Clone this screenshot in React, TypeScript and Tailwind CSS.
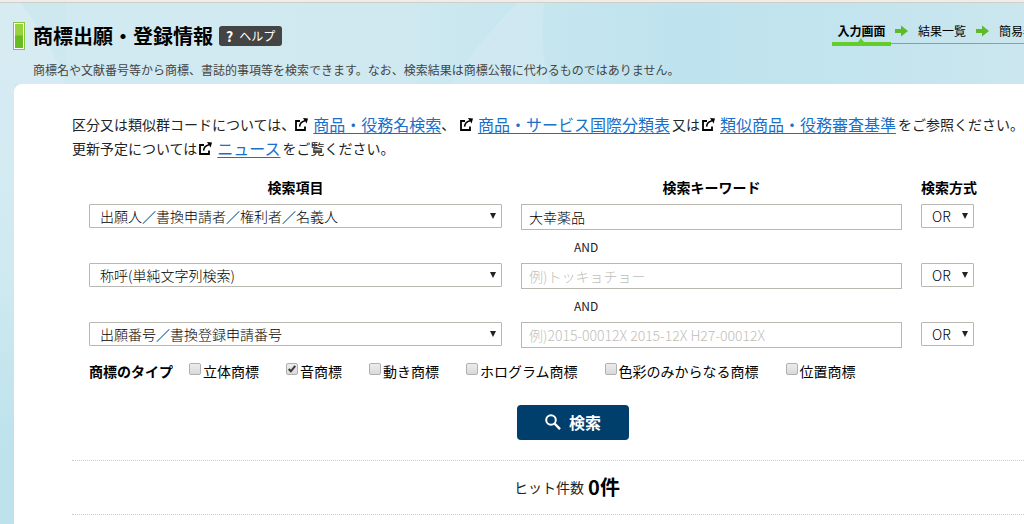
import { useState } from "react";

const FONT = "font-['Noto_Sans_CJK_JP','Noto_Sans',sans-serif]";

function External() {
  return (
    <svg viewBox="0 0 13 13" className="inline-block h-[13px] w-[13px] shrink-0" aria-hidden="true">
      <path d="M5 3H1V12H10V8.5" fill="none" stroke="#000" strokeWidth="1.8" />
      <path d="M4.6 8.6C4.8 5.6 6.6 3.6 10 2.8" fill="none" stroke="#000" strokeWidth="1.6" />
      <path d="M8 0L13 0.6L11.6 5.6Z" fill="#000" />
    </svg>
  );
}

function StepArrow() {
  return (
    <svg viewBox="0 0 13 12" className="h-3 w-[13px] shrink-0" aria-hidden="true">
      <path d="M0 4H6V0.5L13 6L6 11.5V8H0Z" fill="#5dbb27" />
    </svg>
  );
}

function ExtLink({ children }: { children: string }) {
  return (
    <span className="inline-flex items-center gap-[5px]">
      <External />
      <a href="#" className="text-base leading-6 text-[#1a6fc9] underline underline-offset-2">
        {children}
      </a>
    </span>
  );
}

function Select({ label, options }: { label: string; options: string[] }) {
  return (
    <div className="relative">
      <select
        aria-label={label}
        className="block h-6 w-full appearance-none rounded-[1px] border border-[#b8b8b0] bg-white pr-4 pl-[10px] text-sm leading-[22px] font-light text-black"
      >
        {options.map((o) => (
          <option key={o}>{o}</option>
        ))}
      </select>
      <svg viewBox="0 0 6 6" className="pointer-events-none absolute top-[9px] right-[6px] h-[6px] w-[6px]" aria-hidden="true">
        <path d="M0 0H6L3 6Z" fill="#222" />
      </svg>
    </div>
  );
}

const rows = [
  { item: "出願人／書換申請者／権利者／名義人", value: "大幸薬品", hint: "" },
  { item: "称呼(単純文字列検索)", value: "", hint: "例)トッキョチョー" },
  { item: "出願番号／書換登録申請番号", value: "", hint: "例)2015-00012X 2015-12X H27-00012X" },
];

const types = ["立体商標", "音商標", "動き商標", "ホログラム商標", "色彩のみからなる商標", "位置商標"];

function TypeBox({ label, initial }: { label: string; initial: boolean }) {
  const [on, setOn] = useState(initial);
  return (
    <label className="flex items-center gap-[2px]">
      <span className="relative -mt-1 block h-3 w-3">
        <input
          type="checkbox"
          checked={on}
          onChange={() => setOn(!on)}
          className="block h-3 w-3 appearance-none rounded-[2px] border border-[#b0b0b0] bg-linear-to-b from-[#ededed] to-[#d9d9d9]"
        />
        {on && (
          <svg viewBox="0 0 13 13" className="pointer-events-none absolute inset-0 h-3 w-3" aria-hidden="true">
            <path d="M3 6.5L5.3 9L10 3" fill="none" stroke="#3a3a3a" strokeWidth="2.2" />
          </svg>
        )}
      </span>
      {label}
    </label>
  );
}

export default function App() {
  return (
    <div className={`${FONT} relative flex min-h-screen flex-col overflow-hidden bg-[#bfe3ed] text-sm text-black`}>
      <svg className="absolute inset-0 h-full w-full" viewBox="0 0 1024 524" preserveAspectRatio="none" aria-hidden="true">
        <defs>
          <linearGradient id="sky" x1="0" x2="1" y1="0" y2="0">
            <stop offset="0" stopColor="#cfe8f0" />
            <stop offset="0.4" stopColor="#cde8f0" />
            <stop offset="0.66" stopColor="#bfe3ee" />
            <stop offset="0.8" stopColor="#c1e4ee" />
            <stop offset="1" stopColor="#cbe6ee" />
          </linearGradient>
          <linearGradient id="side" x1="0" x2="0" y1="0" y2="1">
            <stop offset="0" stopColor="#d8ebf3" />
            <stop offset="0.5" stopColor="#d0eaf1" />
            <stop offset="0.85" stopColor="#bde2ec" />
          </linearGradient>
        </defs>
        <rect width="1024" height="524" fill="url(#sky)" />
        <path d="M0 0H18Q50 40 66 84H14V524H0Z" fill="url(#side)" />
        <path d="M66 0H418V84H66Z" fill="#d3eaf1" fillOpacity="0.5" />
        <path d="M520 0H545Q538 45 550 84H450Q480 40 520 0Z" fill="#d3eaf2" fillOpacity="0.6" />
      </svg>

      <div className="relative h-[3px] border-b border-[#cfcfc8] bg-[#ededeb]" />

      <header className="relative flex h-[81px] items-start pl-[13px]">
        <div className="flex-1">
          <div className="flex items-center pt-[18px]">
            <span className="h-7 w-3 border border-[#7ecb35] bg-white p-px">
              <span className="block h-full bg-linear-to-b from-[#98d33e] from-45% to-[#68bb22] to-50%" />
            </span>
            <h1 className="pl-2 text-xl leading-[30px] font-bold">商標出願・登録情報</h1>
            <button
              type="button"
              className="ml-[6px] flex h-5 items-center gap-[6px] rounded-[3px] bg-[#444] px-[7px] text-xs leading-5 text-white"
            >
              <b className="text-sm">?</b>ヘルプ
            </button>
          </div>
          <p className="pt-[10px] pl-5 text-xs leading-[18px] whitespace-nowrap text-[#444]">
            商標名や文献番号等から商標、書誌的事項等を検索できます。なお、検索結果は商標公報に代わるものではありません。
          </p>
        </div>
        <ol className="flex w-[192px] items-start overflow-hidden pt-[19px] text-xs leading-[18px] whitespace-nowrap">
          <li className="relative w-[59px] shrink-0 border-b-4 border-[#66cc2b] pb-[2px] text-center font-bold" aria-current="step">
            入力画面
            <svg viewBox="0 0 6 4" className="absolute bottom-0 left-[26px] h-1 w-[6px]" aria-hidden="true">
              <path d="M3 0L6 4H0Z" fill="#66cc2b" />
            </svg>
          </li>
          <li className="flex shrink-0 items-center gap-[10px] border-b border-[#999] pb-[3px] pl-1">
            <StepArrow />
            結果一覧
            <StepArrow />
            簡易表示
          </li>
        </ol>
      </header>

      <main className="relative ml-[14px] flex-1 rounded-tl-[8px] bg-white pt-7 pl-[58px]">
        <div className="leading-6 whitespace-nowrap text-[#222]">
          <p className="flex items-center">
            区分又は類似群コードについては、
            <ExtLink>商品・役務名検索</ExtLink>、<span className="w-[5px]" />
            <ExtLink>商品・サービス国際分類表</ExtLink>
            <span className="px-[2px]">又は</span>
            <ExtLink>類似商品・役務審査基準</ExtLink>
            <span className="pl-[2px]">をご参照ください。</span>
          </p>
          <p className="flex items-center">
            更新予定については<span className="w-[2px]" />
            <ExtLink>ニュース</ExtLink>
            <span className="pl-[2px]">をご覧ください。</span>
          </p>
        </div>

        <form onSubmit={(e) => e.preventDefault()}>
          <div className="pt-[17px] pr-[50px] pl-[17px]">
            <div className="grid grid-cols-[413fr_381fr_53px] gap-x-[19px] pb-[7px] text-center leading-5 font-bold whitespace-nowrap">
              <span>検索項目</span>
              <span>検索キーワード</span>
              <span>検索方式</span>
            </div>
            {rows.map((r, i) => (
              <div key={r.item}>
                {i > 0 && (
                  <div className="grid h-[33px] grid-cols-[413fr_381fr_53px] items-center gap-x-[19px]">
                    <span className="col-start-2 pl-[53px] text-xs leading-4 text-[#222]">AND</span>
                  </div>
                )}
                <div className="grid grid-cols-[413fr_381fr_53px] items-start gap-x-[19px]">
                  <Select label="検索項目" options={[r.item]} />
                  <input
                    type="text"
                    aria-label="検索キーワード"
                    defaultValue={r.value}
                    placeholder={r.hint}
                    className="h-[26px] w-full border border-[#b8b8b0] bg-white px-[7px] text-sm font-light text-black placeholder:text-[#c0c0ba]"
                  />
                  <Select label="検索方式" options={["OR", "AND"]} />
                </div>
              </div>
            ))}
            <fieldset className="flex items-center pt-[13px] leading-5 whitespace-nowrap">
              <legend className="float-left pr-4 font-bold">商標のタイプ</legend>
              <div className="flex gap-[27px]">
                {types.map((t) => (
                  <TypeBox key={t} label={t} initial={t === "音商標"} />
                ))}
              </div>
            </fieldset>
          </div>

          <div className="flex justify-center pt-6 pb-5 pl-[50px]">
            <button
              type="submit"
              className="flex h-[35px] w-28 items-center justify-center gap-2 rounded-[4px] bg-[#003e6b] pb-[2px] text-base font-bold text-white"
            >
              <svg viewBox="0 0 16 16" className="h-4 w-4" fill="none" stroke="#fff" strokeWidth="2" aria-hidden="true">
                <circle cx="6" cy="6" r="4.8" />
                <path d="M9.5 9.5L15 15.2" strokeWidth="2.4" />
              </svg>
              検索
            </button>
          </div>
        </form>

        <div className="flex h-[55px] items-center justify-center gap-1 border-y border-dotted border-[#ccc] pb-[2px] pl-[38px]">
          <span className="text-[#222]">ヒット件数</span>
          <strong className="text-xl">0件</strong>
        </div>
      </main>
    </div>
  );
}
